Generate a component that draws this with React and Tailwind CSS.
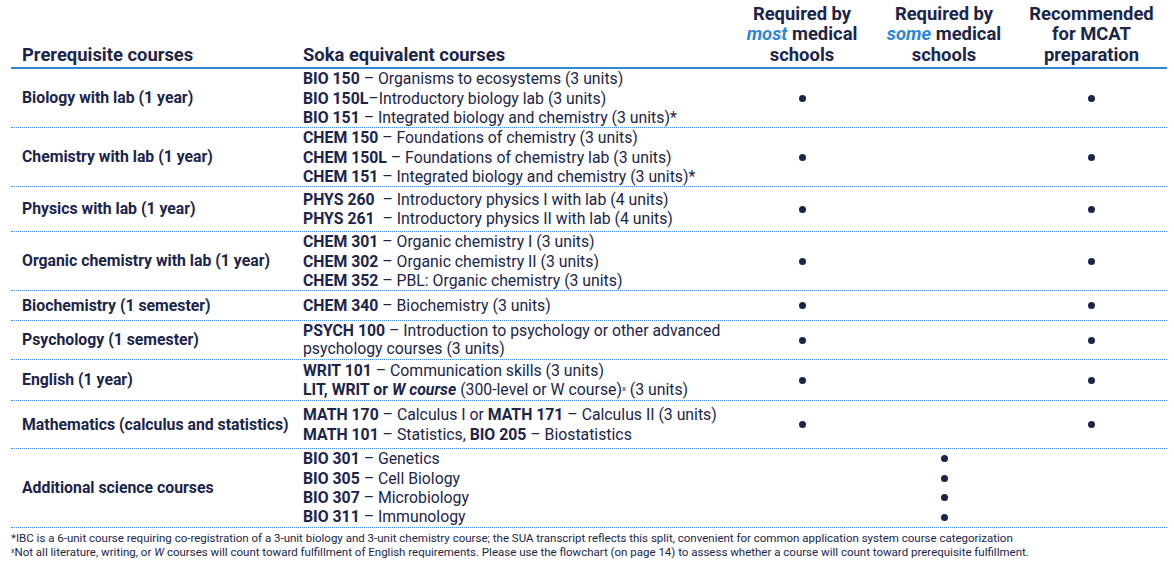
const rows = [
  {
    name: "Biology with lab (1 year)",
    h: "h-[59px]",
    lines: [
      [["BIO 150", true], [" – Organisms to ecosystems (3 units)"]],
      [["BIO 150L", true], ["–Introductory biology lab (3 units)"]],
      [["BIO 151", true], [" – Integrated biology and chemistry (3 units)*"]],
    ],
    most: true,
    mcat: true,
  },
  {
    name: "Chemistry with lab (1 year)",
    h: "h-[59px]",
    lines: [
      [["CHEM 150", true], [" – Foundations of chemistry (3 units)"]],
      [["CHEM 150L", true], [" – Foundations of chemistry lab (3 units)"]],
      [["CHEM 151", true], [" – Integrated biology and chemistry (3 units)*"]],
    ],
    most: true,
    mcat: true,
  },
  {
    name: "Physics with lab (1 year)",
    h: "h-[45px]",
    lines: [
      [["PHYS 260", true], ["\u00a0 – Introductory physics I with lab (4 units)"]],
      [["PHYS 261", true], ["\u00a0 – Introductory physics II with lab (4 units)"]],
    ],
    most: true,
    mcat: true,
  },
  {
    name: "Organic chemistry with lab (1 year)",
    h: "h-[59px]",
    lines: [
      [["CHEM 301", true], [" – Organic chemistry I (3 units)"]],
      [["CHEM 302", true], [" – Organic chemistry II (3 units)"]],
      [["CHEM 352", true], [" – PBL: Organic chemistry (3 units)"]],
    ],
    most: true,
    mcat: true,
  },
  {
    name: "Biochemistry (1 semester)",
    h: "h-[30px]",
    lines: [[["CHEM 340", true], [" – Biochemistry (3 units)"]]],
    most: true,
    mcat: true,
  },
  {
    name: "Psychology (1 semester)",
    h: "h-[39px]",
    tight: true,
    lines: [
      [["PSYCH 100", true], [" – Introduction to psychology or other advanced"]],
      [["psychology courses (3 units)"]],
    ],
    most: true,
    mcat: true,
  },
  {
    name: "English (1 year)",
    h: "h-[41px]",
    lines: [
      [["WRIT 101", true], [" – Communication skills (3 units)"]],
      "english",
    ],
    most: true,
    mcat: true,
  },
  {
    name: "Mathematics (calculus and statistics)",
    h: "h-[48px]",
    lines: [
      [["MATH 170", true], [" – Calculus I or "], ["MATH 171", true], [" – Calculus II (3 units)"]],
      [["MATH 101", true], [" – Statistics, "], ["BIO 205", true], [" – Biostatistics"]],
    ],
    most: true,
    mcat: true,
  },
];

const extra = [
  ["BIO 301", " – Genetics"],
  ["BIO 305", " – Cell Biology"],
  ["BIO 307", " – Microbiology"],
  ["BIO 311", " – Immunology"],
];

const Dot = () => <span className="block w-[7px] h-[7px] rounded-full bg-[#1b2549]" />;

const Line = ({ parts }) => {
  if (parts === "english") {
    return (
      <div className="whitespace-nowrap">
        <span className="font-bold">
          LIT, WRIT or <em>W course</em>
        </span>{" "}
        (300-level or W course)<sup className="text-[8px]">x</sup> (3 units)
      </div>
    );
  }
  return (
    <div className="whitespace-pre">
      {parts.map(([t, b], i) => (
        <span key={i} className={b ? "font-bold" : ""}>
          {t}
        </span>
      ))}
    </div>
  );
};

const cols = "grid grid-cols-[284px_437px_140px_144px_151px] w-[1156px]";

export default function App() {
  return (
    <div
      className="w-[1174px] h-[565px] bg-white text-[#1b2549] pl-[11px] overflow-hidden"
      style={{ fontFamily: "Roboto, 'Liberation Sans', sans-serif" }}
    >
      {/* header */}
      <div className={`${cols} h-[69px] border-b-2 border-[#2e86d6] items-end pb-[2px] text-[18.4px] font-bold leading-[20.5px]`}>
        <div className="pl-[11px]">Prerequisite courses</div>
        <div className="pl-[8px]">Soka equivalent courses</div>
        <div className="text-center">
          Required by
          <br />
          <em className="text-[#2e86d6]">most</em> medical
          <br />
          schools
        </div>
        <div className="text-center">
          Required by
          <br />
          <em className="text-[#2e86d6]">some</em> medical
          <br />
          schools
        </div>
        <div className="text-center">
          Recommended
          <br />
          for MCAT
          <br />
          preparation
        </div>
      </div>

      {rows.map((r) => (
        <div
          key={r.name}
          className={`${cols} ${r.h} items-center border-b border-dotted border-[#3d93e0] text-[15.8px]`}
        >
          <div className="pl-[11px] font-bold whitespace-nowrap">{r.name}</div>
          <div className={`pl-[8px] ${r.tight ? "leading-[18px]" : "leading-[19.5px]"}`}>
            {r.lines.map((l, i) => (
              <Line key={i} parts={l} />
            ))}
          </div>
          <div className="flex justify-center">{r.most && <Dot />}</div>
          <div className="flex justify-center"></div>
          <div className="flex justify-center">{r.mcat && <Dot />}</div>
        </div>
      ))}

      <div className={`${cols} h-[79px] items-center border-b border-dotted border-[#3d93e0] text-[15.8px]`}>
        <div className="pl-[11px] font-bold">Additional science courses</div>
        <div className="pl-[8px] leading-[19.4px]">
          {extra.map(([c, t]) => (
            <div key={c}>
              <span className="font-bold">{c}</span>
              {t}
            </div>
          ))}
        </div>
        <div />
        <div className="flex flex-col items-center leading-[19.4px]">
          {extra.map(([c]) => (
            <div key={c} className="h-[19.4px] flex items-center">
              <Dot />
            </div>
          ))}
        </div>
        <div />
      </div>

      <div className="pt-[3px] text-[11.5px] leading-[14px] whitespace-nowrap">
        <div>
          *IBC is a 6-unit course requiring co-registration of a 3-unit biology and 3-unit chemistry course; the SUA
          transcript reflects this split, convenient for common application system course categorization
        </div>
        <div>
          <sup className="text-[7px]">x</sup>Not all literature, writing, or <em>W</em> courses will count toward
          fulfillment of English requirements. Please use the flowchart (on page 14) to assess whether a course will
          count toward prerequisite fulfillment.
        </div>
      </div>
    </div>
  );
}
